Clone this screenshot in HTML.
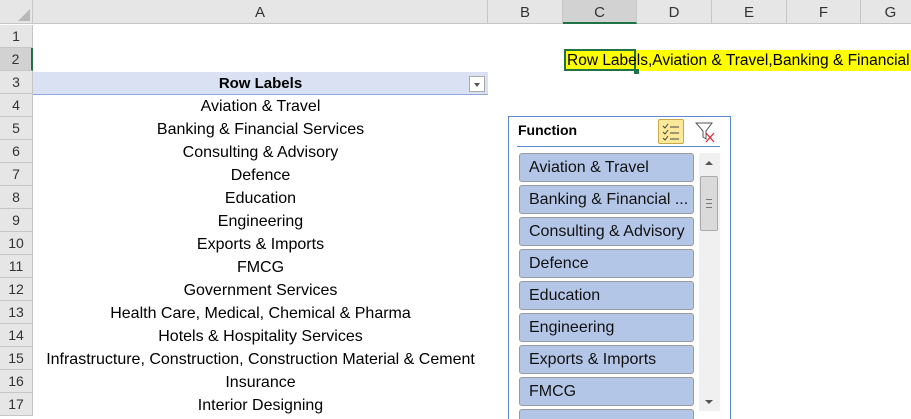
<!DOCTYPE html><html style="height:419px;overflow:hidden"><head><style>
body{margin:0;width:911px;height:419px;overflow:hidden;background:#fff;font-family:"Liberation Sans",sans-serif;position:relative}
.a{position:absolute}
.ch{position:absolute;top:0;height:24px;background:#e6e6e6;border-right:1px solid #c6c6c6;border-bottom:1px solid #c6c6c6;font-size:15px;text-align:center;line-height:25px;color:#333;box-sizing:border-box}
.rh{position:absolute;left:0;width:33px;height:23px;background:#e6e6e6;border-bottom:1px solid #c6c6c6;border-right:1px solid #c6c6c6;box-sizing:border-box;font-size:14px;text-align:center;line-height:23px;color:#333}
.c{position:absolute;left:33px;width:455px;text-align:center;font-size:16px;line-height:23px;color:#000;white-space:nowrap}
.it{position:absolute;left:519px;width:175px;height:29px;background:#b4c6e7;border:1px solid #9a9a9a;border-radius:3px;box-sizing:border-box;font-size:16px;line-height:27px;padding-left:9px;color:#111;white-space:nowrap;overflow:hidden}
</style></head><body>
<div class="ch" style="left:0;width:33px"></div>
<div class="a" style="left:18px;top:9px;width:0;height:0;border-left:12px solid transparent;border-bottom:12px solid #b8b8b8"></div>
<div class="ch" style="left:33px;width:455px">A</div>
<div class="ch" style="left:488px;width:75px">B</div>
<div class="ch" style="left:563px;width:74px;background:#d2d2d2;border-bottom:2px solid #217346">C</div>
<div class="ch" style="left:637px;width:75px">D</div>
<div class="ch" style="left:712px;width:75px">E</div>
<div class="ch" style="left:787px;width:74px">F</div>
<div class="ch" style="left:861px;width:60px">G</div>
<div class="rh" style="top:25px">1</div>
<div class="rh" style="top:48px;background:#d2d2d2;border-right:2px solid #217346">2</div>
<div class="rh" style="top:71px">3</div>
<div class="rh" style="top:94px">4</div>
<div class="rh" style="top:117px">5</div>
<div class="rh" style="top:140px">6</div>
<div class="rh" style="top:163px">7</div>
<div class="rh" style="top:186px">8</div>
<div class="rh" style="top:209px">9</div>
<div class="rh" style="top:232px">10</div>
<div class="rh" style="top:255px">11</div>
<div class="rh" style="top:278px">12</div>
<div class="rh" style="top:301px">13</div>
<div class="rh" style="top:324px">14</div>
<div class="rh" style="top:347px">15</div>
<div class="rh" style="top:370px">16</div>
<div class="rh" style="top:393px">17</div>
<div class="a" style="left:565px;top:50px;width:346px;height:21px;background:#ffff00"></div>
<div class="a" style="left:564px;top:49px;width:72px;height:22px;border:2px solid #217346;box-sizing:border-box"></div>
<div class="a" style="left:634px;top:69px;width:5px;height:5px;background:#217346"></div>
<div class="a" style="left:567px;top:49px;font-size:15.5px;line-height:23px;white-space:nowrap">Row Labels,Aviation &amp; Travel,Banking &amp; Financial</div>
<div class="a" style="left:33px;top:72px;width:455px;height:22px;background:#d9e1f2;border-bottom:1px solid #8ea9db"></div>
<div class="c" style="top:72px;font-weight:bold;font-size:15px">Row Labels</div>
<div class="a" style="left:469px;top:76px;width:16px;height:16px;border:1px solid #aaa;background:#fff;box-sizing:border-box"></div>
<div class="a" style="left:474px;top:83px;border-left:3px solid transparent;border-right:3px solid transparent;border-top:4px solid #555"></div>
<div class="c" style="top:95px">Aviation &amp; Travel</div>
<div class="c" style="top:118px">Banking &amp; Financial Services</div>
<div class="c" style="top:141px">Consulting &amp; Advisory</div>
<div class="c" style="top:164px">Defence</div>
<div class="c" style="top:187px">Education</div>
<div class="c" style="top:210px">Engineering</div>
<div class="c" style="top:233px">Exports &amp; Imports</div>
<div class="c" style="top:256px">FMCG</div>
<div class="c" style="top:279px">Government Services</div>
<div class="c" style="top:302px">Health Care, Medical, Chemical &amp; Pharma</div>
<div class="c" style="top:325px">Hotels &amp; Hospitality Services</div>
<div class="c" style="top:348px">Infrastructure, Construction, Construction Material &amp; Cement</div>
<div class="c" style="top:371px">Insurance</div>
<div class="c" style="top:394px">Interior Designing</div>
<div class="a" style="left:508px;top:116px;width:223px;height:303px;border:1px solid #5b8ad2;border-bottom:none;background:#fff;box-sizing:border-box;overflow:hidden"></div>
<div class="a" style="left:518px;top:122px;font-size:14px;font-weight:bold">Function</div>
<div class="a" style="left:517px;top:146px;width:203px;height:1px;background:#5b8ad2"></div>
<div class="a" style="left:658px;top:119px;width:26px;height:25px;background:#fde99a;border:1px solid #c9a94a;border-radius:2px;box-sizing:border-box"></div>
<svg class="a" style="left:658px;top:119px" width="26" height="25"><g stroke="#444" fill="none" stroke-width="1"><path d="M5 7l2 2 3-4M5 13l2 2 3-4M5 19l2 2 3-4"/><path d="M12 8h9M12 14h9M12 20h9"/></g></svg>
<svg class="a" style="left:694px;top:120px" width="24" height="24"><path d="M2 3h16l-6 8v8l-3-2v-6z" fill="none" stroke="#555"/><path d="M12 13l8 9M20 13l-8 9" stroke="#e23" stroke-width="1.3"/></svg>
<div class="it" style="top:153px">Aviation &amp; Travel</div>
<div class="it" style="top:185px">Banking &amp; Financial ...</div>
<div class="it" style="top:217px">Consulting &amp; Advisory</div>
<div class="it" style="top:249px">Defence</div>
<div class="it" style="top:281px">Education</div>
<div class="it" style="top:313px">Engineering</div>
<div class="it" style="top:345px">Exports &amp; Imports</div>
<div class="it" style="top:377px">FMCG</div>
<div class="it" style="top:409px;height:10px;border-bottom:none;border-radius:3px 3px 0 0"></div>
<div class="a" style="left:699px;top:153px;width:21px;height:258px;background:#f0f0f0"></div>
<div class="a" style="left:705px;top:161px;border-left:4px solid transparent;border-right:4px solid transparent;border-bottom:4px solid #555"></div>
<div class="a" style="left:705px;top:400px;border-left:4px solid transparent;border-right:4px solid transparent;border-top:4px solid #555"></div>
<div class="a" style="left:700px;top:176px;width:18px;height:55px;background:#dadada;border:1px solid #aaa;box-sizing:border-box;border-radius:2px"></div>
<div class="a" style="left:706px;top:199px;width:6px;height:7px;border-top:1px solid #777;border-bottom:1px solid #777"><div style="margin-top:3px;height:1px;background:#777"></div></div>
</body></html>
